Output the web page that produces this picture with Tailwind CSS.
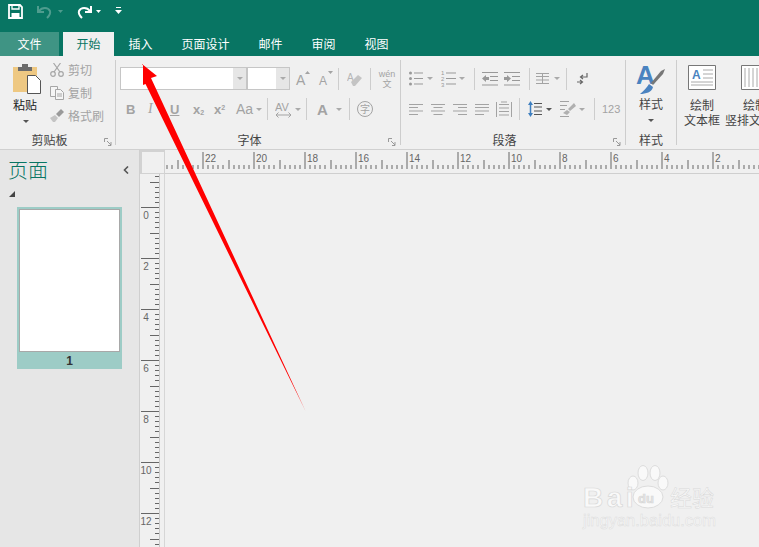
<!DOCTYPE html>
<html><head><meta charset="utf-8">
<script src="https://cdn.jsdelivr.net/npm/@tailwindcss/browser@4"></script>
</head>
<body class="bg-[#f0f0f0]">
<div class="relative w-[759px] h-[547px] overflow-hidden flex flex-col bg-[#f0f0f0] text-[12px] leading-none text-[#444] font-['Noto_Sans_CJK_SC','Liberation_Sans',sans-serif]">

<!-- title + tabs -->
<header class="h-[56px] shrink-0 bg-[#087563] flex flex-col">
  <div class="h-[32px] flex items-start pt-[4px]">
    <svg class="ml-[8px] w-[15px] h-[15px]" viewBox="0 0 15 15"><path d="M1 1h11l2 2v11H1z" fill="none" stroke="#fff" stroke-width="1.8"/><path d="M4 1h7v4H4z" fill="none" stroke="#fff" stroke-width="1.3"/><path d="M3.5 9h8v5h-8z" fill="#fff"/></svg>
    <svg class="ml-[14px] mt-[1px] w-[16px] h-[14px]" viewBox="0 0 16 14"><path d="M2 6c3-4 9-4 11 0 1 3-1 5-3 7" fill="none" stroke="#4f9c8e" stroke-width="2"/><path d="M1 1v6h6" fill="none" stroke="#4f9c8e" stroke-width="2"/></svg>
    <svg class="ml-[5px] mt-[6px] w-[5px] h-[3px]" viewBox="0 0 5 3"><path d="M0 0h5L2.500 3z" fill="#4f9c8e"/></svg>
    <svg class="ml-[13px] mt-[1px] w-[16px] h-[14px]" viewBox="0 0 16 14"><path d="M14 6C11 2 5 2 3 6c-1 3 1 5 3 7" fill="none" stroke="#fff" stroke-width="2"/><path d="M15 1v6H9" fill="none" stroke="#fff" stroke-width="2"/></svg>
    <svg class="ml-[4px] mt-[6px] w-[5px] h-[3px]" viewBox="0 0 5 3"><path d="M0 0h5L2.500 3z" fill="#fff"/></svg>
    <svg class="ml-[14px] mt-[3px] w-[7px] h-[7px]" viewBox="0 0 7 7"><path d="M1 .5h5" stroke="#fff"/><path d="M0 3h7L3.500 7z" fill="#fff"/></svg>
  </div>
  <nav class="h-[24px] flex items-stretch text-white">
    <div class="w-[59px] bg-[#3f9484] flex items-center justify-center">文件</div>
    <div class="ml-[4px] w-[51px] bg-[#f0f0f0] text-[#087563] flex items-center justify-center">开始</div>
    <div class="px-[14.500px] flex items-center">插入</div>
    <div class="px-[14.500px] flex items-center">页面设计</div>
    <div class="px-[14.500px] flex items-center">邮件</div>
    <div class="px-[14.500px] flex items-center">审阅</div>
    <div class="px-[14.500px] flex items-center">视图</div>
  </nav>
</header>

<!-- ribbon -->
<section class="h-[94px] shrink-0 flex border-b border-[#d0d0d0] bg-[#f0f0f0]">
  <!-- clipboard -->
  <div class="w-[116px] shrink-0 relative flex flex-col">
    <div class="h-[76px] flex">
      <div class="w-[50px] pl-[13px] pt-[8px] flex flex-col">
        <svg class="w-[28px] h-[30px]" viewBox="0 0 28 30"><path d="M0 3h24v25H0z" fill="#eec882"/><path d="M5 3h4V0h6v3h4v4H5z" fill="#6b6b6b"/><path d="M14.500 11.500h8l5 5v13h-13z" fill="#fff" stroke="#555"/></svg>
        <span class="mt-[4px] text-[#222] text-[12px] leading-[14px]">粘贴</span>
        <svg class="ml-[10px] mt-[8px] w-[6px] h-[3px]" viewBox="0 0 6 3"><path d="M0 0h6L3 3z" fill="#555"/></svg>
      </div>
      <div class="flex flex-col pt-[6px] gap-[7px] text-[#a3a3a3]">
        <div class="flex items-center h-[16px] gap-[4px]">
          <svg class="w-[14px] h-[14px]" viewBox="0 0 14 14"><g fill="none" stroke="#a6a6a6" stroke-width="1.200"><circle cx="3" cy="11" r="2.300"/><circle cx="11" cy="11" r="2.300"/><path d="M4 9 10.500 0M10 9 3.500 0"/></g></svg>
          <span>剪切</span></div>
        <div class="flex items-center h-[16px] gap-[4px]">
          <svg class="w-[14px] h-[14px]" viewBox="0 0 14 14"><g fill="#f5f5f5" stroke="#a6a6a6"><path d="M.5.500h7v10h-7z"/><path d="M5.500 3.500h5l3 3v7h-8z"/></g><path d="M7 8h5M7 10h5" stroke="#a6a6a6"/></svg>
          <span>复制</span></div>
        <div class="flex items-center h-[16px] gap-[4px]">
          <svg class="w-[14px] h-[14px]" viewBox="0 0 14 14"><path d="M0 9l5-3 3 3-3 4H3z" fill="#c4c4c4"/><path d="M6 5l5-5 3 3-5 5z" fill="#9a9a9a"/></svg>
          <span>格式刷</span></div>
      </div>
    </div>
    <div class="h-[16px] flex items-center justify-center pr-[17px]">剪贴板</div>
    <svg class="absolute right-[4px] bottom-[3px] w-[8px] h-[8px]" viewBox="0 0 8 8"><path d="M.5 4V.5H4M3 3l4 4M7 4v3.500H4" fill="none" stroke="#999"/></svg>
    <div class="absolute right-0 top-[4px] h-[85px] w-px bg-[#cdcdcd]"></div>
  </div>

  <!-- font -->
  <div class="w-[285px] shrink-0 relative flex flex-col">
    <div class="h-[76px] pt-[11px] pl-[4px] flex flex-col">
      <div class="h-[23px] flex items-center">
        <div class="w-[127px] h-[23px] bg-white border border-[#c6c6c6] flex justify-end">
          <div class="w-[13px] bg-[#e6e6e6] flex items-center justify-center"><svg class="w-[6px] h-[3px]" viewBox="0 0 6 3"><path d="M0 0h6L3 3z" fill="#aaa"/></svg></div>
        </div>
        <div class="w-[43px] h-[23px] bg-white border border-[#c6c6c6] flex justify-end">
          <div class="w-[13px] bg-[#e6e6e6] flex items-center justify-center"><svg class="w-[6px] h-[3px]" viewBox="0 0 6 3"><path d="M0 0h6L3 3z" fill="#aaa"/></svg></div>
        </div>
        <svg class="ml-[6px] w-[14px] h-[17px] overflow-visible" viewBox="0 0 14 17"><text x="0" y="15" font-size="14" fill="#a3a3a3" font-family="Liberation Sans">A</text><path d="M9 4l2.500-3L14 4z" fill="#a3a3a3"/></svg>
        <svg class="ml-[9px] w-[14px] h-[17px] overflow-visible" viewBox="0 0 14 17"><text x="0" y="15" font-size="12" fill="#a3a3a3" font-family="Liberation Sans">A</text><path d="M9 1l2.500 3L14 1z" fill="#a3a3a3"/></svg>
        <div class="ml-[5px] w-px h-[22px] bg-[#cdcdcd]"></div>
        <svg class="ml-[8px] w-[16px] h-[16px]" viewBox="0 0 16 16"><text x="0" y="10" font-size="10" fill="#b5b5b5" font-family="Liberation Sans">A</text><path d="M4 11l7-7 4 3-7 8H6z" fill="#c4c4c4"/></svg>
        <div class="ml-[7px] w-px h-[22px] bg-[#cdcdcd]"></div>
        <div class="ml-[7px] w-[18px] flex flex-col items-center text-[#a3a3a3] text-[9px] leading-[9px]"><span class="font-['Liberation_Sans']">wén</span><span class="text-[9px]">文</span></div>
      </div>
      <div class="h-[22px] mt-[8px] flex items-center text-[#a3a3a3]">
        <span class="ml-[6px] w-[10px] font-bold font-['Liberation_Sans'] text-[13px]">B</span>
        <span class="ml-[12px] w-[10px] italic font-['Liberation_Serif'] text-[14px]">I</span>
        <span class="ml-[12px] w-[10px] underline font-bold font-['Liberation_Sans'] text-[13px]">U</span>
        <span class="ml-[13px] w-[12px] font-bold font-['Liberation_Sans'] text-[13px]">x<sub class="text-[7px]">2</sub></span>
        <span class="ml-[9px] w-[13px] font-bold font-['Liberation_Sans'] text-[13px]">x<sup class="text-[7px]">2</sup></span>
        <span class="ml-[9px] w-[18px] font-['Liberation_Sans'] text-[14px]">Aa</span>
        <svg class="ml-[2px] w-[6px] h-[3px]" viewBox="0 0 6 3"><path d="M0 0h6L3 3z" fill="#aaa"/></svg>
        <div class="ml-[5px] w-px h-[22px] bg-[#cdcdcd]"></div>
        <svg class="ml-[7px] w-[17px] h-[18px]" viewBox="0 0 17 18"><text x="0" y="11" font-size="11" fill="#a3a3a3" font-family="Liberation Sans">AV</text><path d="M1 15h15M3.500 12.500 1 15l2.500 2.500M13.500 12.500 16 15l-2.500 2.500" fill="none" stroke="#a3a3a3"/></svg>
        <svg class="ml-[3px] w-[6px] h-[3px]" viewBox="0 0 6 3"><path d="M0 0h6L3 3z" fill="#aaa"/></svg>
        <div class="ml-[5px] w-px h-[22px] bg-[#cdcdcd]"></div>
        <span class="ml-[10px] w-[14px] font-bold font-['Liberation_Sans'] text-[15px]">A</span>
        <svg class="ml-[5px] w-[6px] h-[3px]" viewBox="0 0 6 3"><path d="M0 0h6L3 3z" fill="#aaa"/></svg>
        <div class="ml-[7px] w-px h-[22px] bg-[#cdcdcd]"></div>
        <div class="ml-[7px] w-[16px] h-[16px] rounded-full border border-[#a3a3a3] flex items-center justify-center text-[10px]">字</div>
      </div>
    </div>
    <div class="h-[16px] flex items-center justify-center pr-[18px]">字体</div>
    <svg class="absolute right-[5px] bottom-[3px] w-[8px] h-[8px]" viewBox="0 0 8 8"><path d="M.5 4V.5H4M3 3l4 4M7 4v3.500H4" fill="none" stroke="#999"/></svg>
    <div class="absolute right-0 top-[4px] h-[85px] w-px bg-[#cdcdcd]"></div>
  </div>

  <!-- paragraph -->
  <div class="w-[225px] shrink-0 relative flex flex-col">
    <div class="h-[76px] pt-[11px] pl-[8px] flex flex-col">
      <div class="h-[23px] flex items-center">
        <svg class="w-[14px] h-[15px]" viewBox="0 0 14 15"><path d="M5 2h9M5 7.500h9M5 13h9" stroke="#999"/><circle cx="1.500" cy="2" r="1.500" fill="#999"/><circle cx="1.500" cy="7.500" r="1.500" fill="#999"/><circle cx="1.500" cy="13" r="1.500" fill="#999"/></svg>
        <svg class="ml-[4px] w-[6px] h-[3px]" viewBox="0 0 6 3"><path d="M0 0h6L3 3z" fill="#aaa"/></svg>
        <svg class="ml-[8px] w-[15px] h-[17px]" viewBox="0 0 15 17"><g font-size="6" fill="#999" font-family="Liberation Sans"><text x="0" y="5">1</text><text x="0" y="11">2</text><text x="0" y="17">3</text></g><path d="M5 3h10M5 8.500h10M5 14h10" stroke="#999"/></svg>
        <svg class="ml-[3px] w-[6px] h-[3px]" viewBox="0 0 6 3"><path d="M0 0h6L3 3z" fill="#aaa"/></svg>
        <div class="ml-[9px] w-px h-[22px] bg-[#cdcdcd]"></div>
        <svg class="ml-[7px] w-[16px] h-[14px]" viewBox="0 0 16 14"><path d="M0 .5h16M8 4.500h8M8 8.500h8M0 13h16" stroke="#999"/><path d="M0 6.500 4 3v2h3v3H4v2z" fill="#999"/></svg>
        <svg class="ml-[6px] w-[16px] h-[14px]" viewBox="0 0 16 14"><path d="M0 .5h16M8 4.500h8M8 8.500h8M0 13h16" stroke="#999"/><path d="M7 6.500 3 3v2H0v3h3v2z" fill="#999"/></svg>
        <div class="ml-[9px] w-px h-[22px] bg-[#cdcdcd]"></div>
        <svg class="ml-[6px] w-[13px] h-[11px]" viewBox="0 0 13 11"><path d="M0 .5h13M0 3.500h13M0 7h13M0 10.500h13M6.500 0v11" stroke="#a3a3a3"/></svg>
        <svg class="ml-[5px] w-[6px] h-[3px]" viewBox="0 0 6 3"><path d="M0 0h6L3 3z" fill="#aaa"/></svg>
        <div class="ml-[6px] w-px h-[22px] bg-[#cdcdcd]"></div>
        <svg class="ml-[10px] w-[11px] h-[12px]" viewBox="0 0 11 12"><path d="M10 0v4H4M6 2 3.500 4 6 6" fill="none" stroke="#666" stroke-width="1.200"/><path d="M0 9h5M3 7l2.500 2L3 11" fill="none" stroke="#666" stroke-width="1.200"/></svg>
      </div>
      <div class="h-[22px] mt-[8px] flex items-center">
        <svg class="w-[14px] h-[11px]" viewBox="0 0 14 11"><path d="M0 .5h14M0 3.500h9M0 7h14M0 10.500h9" stroke="#a3a3a3"/></svg>
        <svg class="ml-[8px] w-[14px] h-[11px]" viewBox="0 0 14 11"><path d="M0 .5h14M2.500 3.500h9M0 7h14M2.500 10.500h9" stroke="#a3a3a3"/></svg>
        <svg class="ml-[8px] w-[14px] h-[11px]" viewBox="0 0 14 11"><path d="M0 .5h14M5 3.500h9M0 7h14M5 10.500h9" stroke="#a3a3a3"/></svg>
        <svg class="ml-[8px] w-[14px] h-[11px]" viewBox="0 0 14 11"><path d="M0 .5h14M0 3.500h14M0 7h14M0 10.500h9" stroke="#a3a3a3"/></svg>
        <svg class="ml-[7px] w-[16px] h-[17px]" viewBox="0 0 16 17"><path d="M.5 1v15M15.500 1v15M3 3.500h10M3 7h10M3 10.500h10M3 14h10M5 1h6" stroke="#a3a3a3"/></svg>
        <div class="ml-[7px] w-px h-[22px] bg-[#cdcdcd]"></div>
        <svg class="ml-[8px] w-[14px] h-[16px]" viewBox="0 0 14 16"><path d="M6 2.500h8M6 6h8M6 10h8M6 13.500h8" stroke="#555"/><path d="M2.500 2v12" stroke="#3f7fbf" stroke-width="1.500"/><path d="M0 4l2.500-4L5 4zM0 12l2.500 4L5 12z" fill="#3f7fbf"/></svg>
        <svg class="ml-[4px] w-[6px] h-[3px]" viewBox="0 0 6 3"><path d="M0 0h6L3 3z" fill="#555"/></svg>
        <svg class="ml-[8px] w-[16px] h-[16px]" viewBox="0 0 16 16"><path d="M0 .5h9M0 4.500h7M0 8.500h5M0 15.500h9" stroke="#a3a3a3"/><path d="M3 12l4-3 3 2-3 3zM8 8l6-6 2 3-6 5z" fill="#b0b0b0"/></svg>
        <svg class="ml-[3px] w-[6px] h-[3px]" viewBox="0 0 6 3"><path d="M0 0h6L3 3z" fill="#aaa"/></svg>
        <div class="ml-[9px] w-px h-[22px] bg-[#cdcdcd]"></div>
        <span class="ml-[7px] font-['Liberation_Sans'] text-[#a3a3a3] text-[11px]">123</span>
      </div>
    </div>
    <div class="h-[16px] flex items-center justify-center pr-[18px]">段落</div>
    <svg class="absolute right-[5px] bottom-[3px] w-[8px] h-[8px]" viewBox="0 0 8 8"><path d="M.5 4V.5H4M3 3l4 4M7 4v3.500H4" fill="none" stroke="#999"/></svg>
    <div class="absolute right-0 top-[4px] h-[85px] w-px bg-[#cdcdcd]"></div>
  </div>

  <!-- styles -->
  <div class="w-[51px] shrink-0 relative flex flex-col">
    <div class="h-[76px] flex flex-col items-center pt-[8px] pr-[1px]">
      <svg class="w-[30px] h-[30px]" viewBox="0 0 30 30"><text x="0" y="20" font-size="26" font-weight="700" fill="#4a83c0" font-family="Liberation Sans">A</text><path d="M4 30c6 0 12-2 13-7l-4-3c-2 3-5 7-9 10z" fill="#4a83c0"/><path d="M15 19l10-12 4-2-2 5-10 11z" fill="#777"/></svg>
      <span class="mt-[3px] leading-[14px]">样式</span>
      <svg class="mt-[8px] w-[6px] h-[3px]" viewBox="0 0 6 3"><path d="M0 0h6L3 3z" fill="#555"/></svg>
    </div>
    <div class="h-[16px] flex items-center justify-center pr-[1px]">样式</div>
    <div class="absolute right-0 top-[4px] h-[85px] w-px bg-[#cdcdcd]"></div>
  </div>

  <!-- draw -->
  <div class="flex-1 flex pt-[9px] overflow-hidden">
    <div class="w-[50px] shrink-0 flex flex-col items-center">
      <svg class="w-[28px] h-[25px]" viewBox="0 0 28 25"><path d="M.5.500h27v24H.500z" fill="#fff" stroke="#777"/><path d="M15 5h10M15 9h10M15 13h10M3 17h22M3 20h22" stroke="#aaa"/><text x="4" y="14" font-size="12" font-weight="700" fill="#4a83c0" font-family="Liberation Sans">A</text></svg>
      <div class="mt-[7px] flex flex-col items-center"><span class="h-[15px] leading-[15px]">绘制</span><span class="h-[15px] leading-[15px]">文本框</span></div>
    </div>
    <div class="w-[60px] shrink-0 ml-[-2px] flex flex-col items-center">
      <svg class="w-[28px] h-[25px]" viewBox="0 0 28 25"><path d="M.5.500h27v24H.500z" fill="#fff" stroke="#777"/><path d="M4 3v19M8 3v19M12 3v19M16 3v19" stroke="#aaa"/></svg>
      <div class="mt-[7px] flex flex-col items-center whitespace-nowrap"><span class="h-[15px] leading-[15px]">绘制</span><span class="h-[15px] leading-[15px]">竖排文本框</span></div>
    </div>
  </div>
</section>

<!-- workspace -->
<main class="flex-1 flex min-h-0">
  <aside class="w-[140px] shrink-0 bg-[#e6e6e6] border-r border-[#cfcfcf] flex flex-col">
    <div class="h-[39px] flex items-center pl-[8px] pr-[10px] justify-between">
      <span class="text-[20px] font-light text-[#087563]">页面</span>
      <svg class="w-[6px] h-[8px]" viewBox="0 0 6 8"><path d="M5 .5 1.500 4 5 7.500" fill="none" stroke="#555" stroke-width="1.600"/></svg>
    </div>
    <svg class="ml-[9px] mt-[2px] w-[6px] h-[6px]" viewBox="0 0 6 6"><path d="M6 0v6H0z" fill="#444"/></svg>
    <div class="ml-[17px] mt-[10px] w-[105px] h-[162px] bg-[#9dccc6] px-[2px] pt-[2px] flex flex-col">
      <div class="w-[101px] h-[143px] bg-white border border-[#a8a8a8]"></div>
      <div class="flex-1 flex items-center justify-center font-bold text-[#333] text-[12px] font-['Liberation_Sans']">1</div>
    </div>
  </aside>
  <div class="flex-1 flex flex-col min-w-0">
    <div class="h-[24px] shrink-0 flex">
      <div class="w-[25px] shrink-0 border-2 border-b border-r border-[#d2d2d2]"></div>
      <svg class="shrink-0" width="594" height="24" viewBox="0 0 594 24" shape-rendering="crispEdges">
        <defs><pattern id="hr" patternUnits="userSpaceOnUse" x="37.500" y="0" width="51" height="24">
          <path d="M.5 2v17M5.600 15v4M10.700 15v4M15.800 15v4M20.900 15v4M26 10v9M31.100 15v4M36.200 15v4M41.300 15v4M46.400 15v4" stroke="#666"/>
        </pattern></defs>
        <rect x="1" width="593" height="24" fill="url(#hr)"/>
        <path d="M0 23.500h594" stroke="#cfcfcf"/>
        <g font-size="10" fill="#666" font-family="Liberation Sans" shape-rendering="auto">
          <text x="40" y="12">22</text><text x="91" y="12">20</text><text x="142" y="12">18</text><text x="193" y="12">16</text><text x="244" y="12">14</text><text x="295" y="12">12</text><text x="346" y="12">10</text><text x="397" y="12">8</text><text x="448" y="12">6</text><text x="499" y="12">4</text><text x="550" y="12">2</text>
        </g>
      </svg>
    </div>
    <div class="flex-1 flex min-h-0">
      <svg class="shrink-0" width="25" height="373" viewBox="0 0 25 373" shape-rendering="crispEdges">
        <defs><pattern id="vr" patternUnits="userSpaceOnUse" x="0" y="33" width="25" height="51">
          <path d="M1 .5h18M15 5.600h4M15 10.700h4M15 15.800h4M15 20.900h4M10 26h9M15 31.100h4M15 36.200h4M15 41.300h4M15 46.400h4" stroke="#666"/>
        </pattern></defs>
        <rect y="2" width="25" height="371" fill="url(#vr)"/>
        <path d="M19.500 0v373" stroke="#c8c8c8"/>
        <path d="M24.500 0v373" stroke="#d6d6d6"/>
        <g font-size="10" fill="#666" font-family="Liberation Sans" text-anchor="middle" shape-rendering="auto">
          <text x="6" y="45">0</text><text x="6" y="96">2</text><text x="6" y="147">4</text><text x="6" y="198">6</text><text x="6" y="249">8</text><text x="6" y="300">10</text><text x="6" y="351">12</text>
        </g>
      </svg>
      <div class="flex-1 bg-[#f0f0f0]"></div>
    </div>
  </div>
</main>

<!-- red arrow overlay -->
<svg class="absolute left-0 top-0 pointer-events-none" width="759" height="547" viewBox="0 0 759 547"><path d="M142 64 157 76 151 78 305.500 411 145.500 84 143 85 143 64Z" fill="#ff0000"/></svg>

<!-- watermark overlay -->
<svg class="absolute left-[578px] top-[460px] pointer-events-none" width="145" height="75" viewBox="0 0 145 75">
  <g fill="#f9f9f9" stroke="#dcdcdc" stroke-width="1">
    <ellipse cx="55" cy="23" rx="5" ry="7"/><ellipse cx="65" cy="13" rx="5" ry="7.500"/><ellipse cx="77" cy="13" rx="5" ry="7.500"/><ellipse cx="85" cy="23" rx="5" ry="7"/>
    <ellipse cx="70" cy="37" rx="15" ry="11"/>
  </g>
  <g font-family="Liberation Sans" font-weight="700" fill="#f9f9f9" stroke="#d8d8d8" stroke-width=".7">
    <text x="5" y="47" font-size="28" letter-spacing="3.500">Bai</text>
    <text x="60" y="43" font-size="13" fill="#e6e6e6">du</text>
  </g>
  <text x="92" y="46" font-size="22" fill="#f9f9f9" stroke="#d8d8d8" stroke-width=".5" font-family="Noto Sans CJK SC">经验</text>
  <text x="5" y="66" font-size="16.500" fill="#f9f9f9" stroke="#dcdcdc" stroke-width=".5" font-family="Liberation Sans">jingyan.baidu.com</text>
</svg>
</div>
</body></html>
